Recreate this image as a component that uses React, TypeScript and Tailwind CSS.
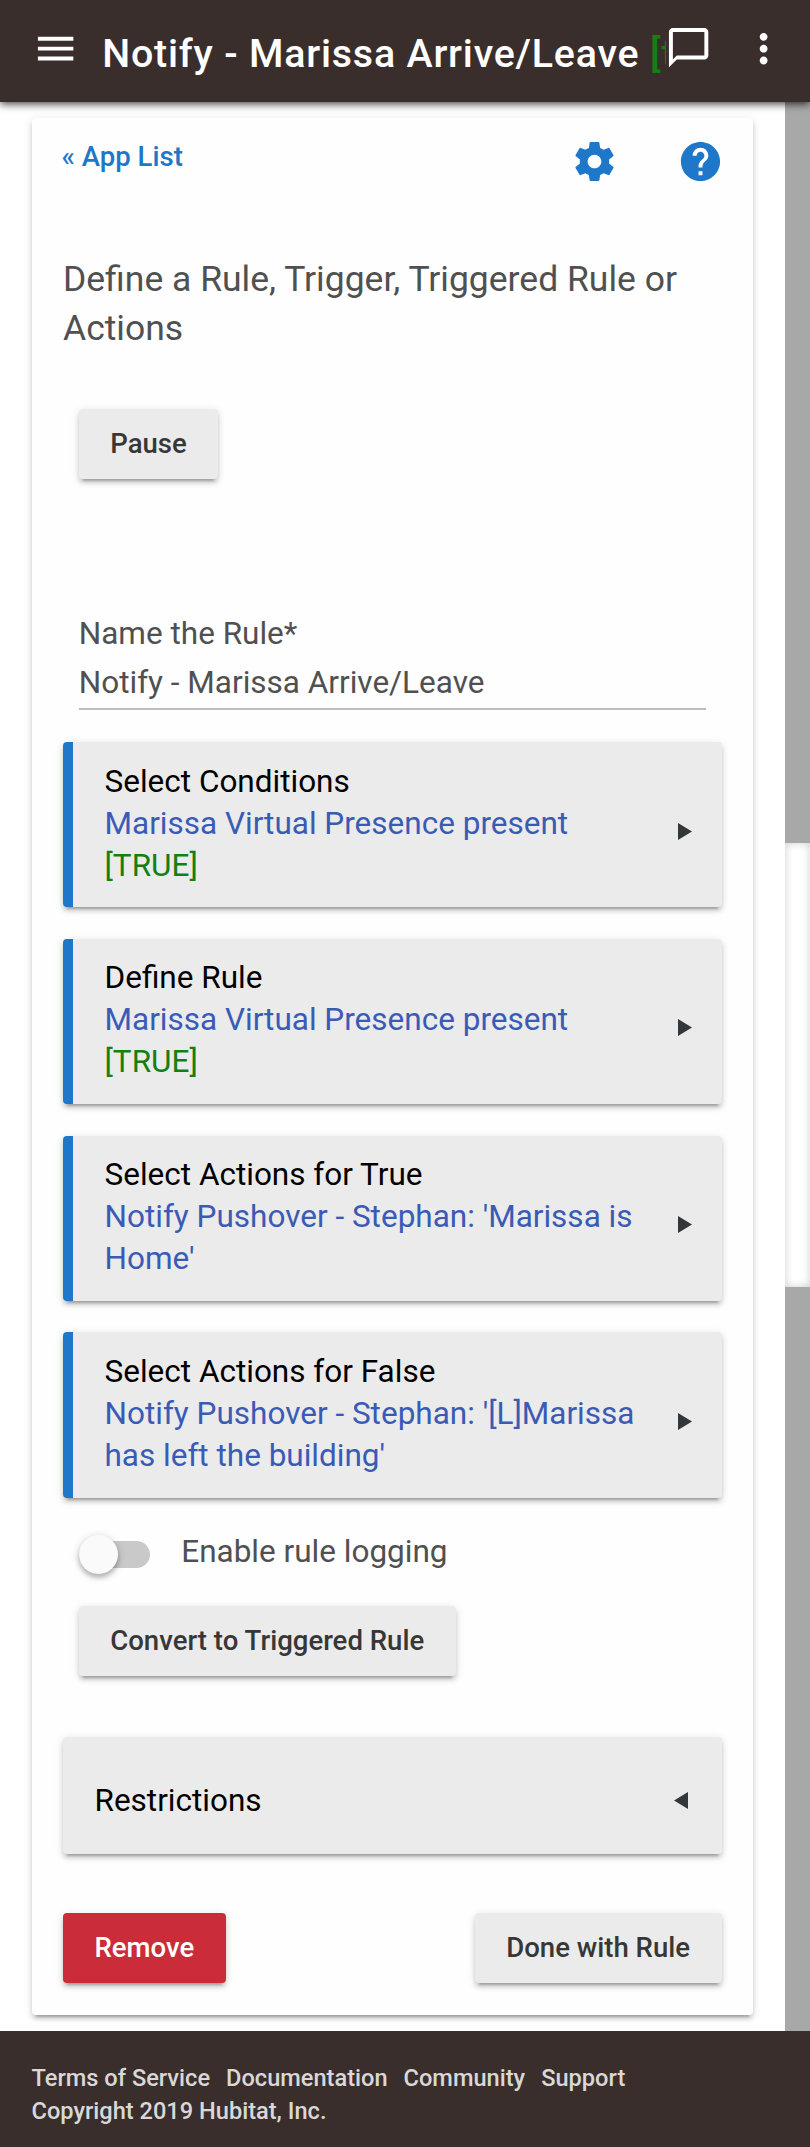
import { MdChatBubbleOutline, MdHelp, MdMenu, MdMoreVert } from "react-icons/md";
import type { ReactNode } from "react";

type Rule = {
  title: string;
  detail: string;
  status?: string;
};

const RULES: Rule[] = [
  { title: "Select Conditions", detail: "Marissa Virtual Presence present", status: "[TRUE]" },
  { title: "Define Rule", detail: "Marissa Virtual Presence present", status: "[TRUE]" },
  { title: "Select Actions for True", detail: "Notify Pushover - Stephan: 'Marissa is Home'" },
  { title: "Select Actions for False", detail: "Notify Pushover - Stephan: '[L]Marissa has left the building'" },
];

const FOOTER_LINKS = ["Terms of Service", "Documentation", "Community", "Support"];

const RAISED =
  "rounded-[4px] shadow-[0_4px_4px_0_rgba(0,0,0,0.14),0_6px_2px_-4px_rgba(0,0,0,0.2),0_2px_10px_0_rgba(0,0,0,0.12)]";

function GearIcon() {
  return (
    <svg viewBox="0 0 24 24" className="size-[47px] fill-current">
      <path d="M19.43 12.98c.04-.32.07-.64.07-.98s-.03-.66-.07-.98l2.11-1.65c.19-.15.24-.42.12-.64l-2-3.46c-.12-.22-.39-.3-.61-.22l-2.49 1c-.52-.4-1.08-.73-1.69-.98l-.38-2.65C14.46 2.18 14.25 2 14 2h-4c-.25 0-.46.18-.49.42l-.38 2.65c-.61.25-1.17.59-1.69.98l-2.49-1c-.23-.09-.49 0-.61.22l-2 3.46c-.13.22-.07.49.12.64l2.11 1.65c-.04.32-.07.65-.07.98s.03.66.07.98l-2.11 1.65c-.19.15-.24.42-.12.64l2 3.46c.12.22.39.3.61.22l2.49-1c.52.4 1.08.73 1.69.98l.38 2.65c.03.24.24.42.49.42h4c.25 0 .46-.18.49-.42l.38-2.65c.61-.25 1.17-.59 1.69-.98l2.49 1c.23.09.49 0 .61-.22l2-3.46c.12-.22.07-.49-.12-.64l-2.11-1.65zM12 15.5c-1.93 0-3.5-1.57-3.5-3.5s1.57-3.5 3.5-3.5 3.5 1.57 3.5 3.5-1.57 3.5-3.5 3.5z" />
    </svg>
  );
}

function Arrow({ left = false }: { left?: boolean }) {
  return (
    <svg viewBox="0 0 14 17" className="h-[17px] w-[14px] shrink-0 fill-[#33373a]">
      <path d={left ? "M14 0v17L0 8.5z" : "M0 0v17l14-8.5z"} />
    </svg>
  );
}

function Button({ children, danger = false }: { children: ReactNode; danger?: boolean }) {
  return (
    <button
      className={`block h-[70.6px] px-[31.5px] pb-[1.6px] text-[27.56px] leading-[69px] font-medium whitespace-nowrap ${RAISED} ${
        danger ? "bg-[#cb2c39] text-white" : "bg-[#ebebeb] text-[#373737]"
      }`}
    >
      {children}
    </button>
  );
}

function RuleCard({ rule }: { rule: Rule }) {
  return (
    <div
      className={`flex h-[165.4px] items-center border-l-[10px] border-[#1f77c9] bg-[#ebebeb] pr-[29.5px] pl-[31.5px] text-[31.5px] leading-[42px] ${RAISED}`}
    >
      <div className="w-[540px] pb-0.5">
        <p className="text-black">{rule.title}</p>
        <p className="text-[#3a5bb5]">{rule.detail}</p>
        {rule.status && <p className="text-[#128012]">{rule.status}</p>}
      </div>
      <div className="mt-[13px] ml-auto">
        <Arrow />
      </div>
    </div>
  );
}

export default function App() {
  return (
    <div className="flex h-[2147px] w-[810px] flex-col overflow-hidden bg-white font-['Roboto',sans-serif]">
      <header className="relative z-10 flex h-[102px] shrink-0 bg-[#392e2c] text-white shadow-[0_2px_8px_rgba(0,0,0,0.75)]">
        <MdMenu className="mt-[25.4px] ml-[31.5px] size-[47.25px] shrink-0" />
        <h1 className="ml-[23.5px] w-[563.5px] overflow-hidden pt-[25.5px] text-[39.4px] leading-[56px] font-medium tracking-[0.02em] whitespace-nowrap">
          Notify - Marissa Arrive/Leave <span className="text-[#128012]">[true]</span>
        </h1>
        <MdChatBubbleOutline className="mt-[23.6px] -ml-[0.4px] size-[47.25px] shrink-0" />
        <MdMoreVert className="mt-[24.8px] ml-[27.8px] size-[47.25px] shrink-0" />
      </header>

      <div className="flex h-[1929px] shrink-0">
        <main className="w-[785px] px-[31.5px] pt-4">
          <section className={`h-[1897px] w-[721.5px] bg-[#fefefe] px-[31.5px] ${RAISED}`}>
            <div className="flex h-[137px] text-[#1f77c9]">
              <a className="mt-[22px] -ml-[1.5px] text-[27.56px] leading-[34px] font-medium">« App List</a>
              <div className="mt-5 mr-[-2px] ml-auto flex gap-[59px]">
                <GearIcon />
                <MdHelp className="size-[47px]" />
              </div>
            </div>

            <h2 className="text-[35.5px] leading-[49.3px] text-[#505050]">
              Define a Rule, Trigger, Triggered Rule or Actions
            </h2>

            <div className="px-[15.75px] pt-[55px]">
              <Button>Pause</Button>
            </div>

            <div className="mx-[15.75px] mt-[129.4px] border-b-[2px] border-[#bdbdbd] text-[31.5px] leading-[49px] text-[#505050]">
              <p>Name the Rule*</p>
              <p className="h-[50.6px]">Notify - Marissa Arrive/Leave</p>
            </div>

            <div className="mt-[31.8px] flex flex-col gap-[31.4px]">
              {RULES.map((rule) => (
                <RuleCard key={rule.title} rule={rule} />
              ))}
            </div>

            <label className="mx-[15.75px] mt-[30px] flex h-12 items-center gap-[31.5px]">
              <span className="mt-[5px] flex h-[27px] w-[71px] items-center rounded-full bg-[#c9c9c9]">
                <span className="size-[39.4px] shrink-0 rounded-full bg-[#fafafa] shadow-[0_4px_4px_rgba(0,0,0,0.18),0_2px_8px_rgba(0,0,0,0.2)]" />
              </span>
              <span className="text-[31.5px] leading-[42px] text-[#505050]">Enable rule logging</span>
            </label>

            <div className="px-[15.75px] pt-[30px]">
              <Button>Convert to Triggered Rule</Button>
            </div>

            <div className={`mt-[61px] flex h-[117px] items-center justify-between bg-[#ebebeb] pt-2.5 pr-[34px] pl-[31.5px] text-[31.5px] text-black ${RAISED}`}>
              <span>Restrictions</span>
              <Arrow left />
            </div>

            <div className="mt-[58.6px] flex justify-between">
              <Button danger>Remove</Button>
              <Button>Done with Rule</Button>
            </div>
          </section>
        </main>

        {/* page scrollbar */}
        <div className="w-[25px] bg-[#a8a8a8] pt-[741px]">
          <div className="h-[444px] bg-white shadow-[inset_0_0_8px_rgba(0,0,0,0.2)]" />
        </div>
      </div>

      <footer className="h-[116px] shrink-0 bg-[#392e2c] px-[31.5px] pt-[30.5px] text-[23.6px] leading-[33.5px] font-medium text-[#dad8d7]">
        <nav className="flex gap-4">
          {FOOTER_LINKS.map((link) => (
            <a key={link}>{link}</a>
          ))}
        </nav>
        <p>Copyright 2019 Hubitat, Inc.</p>
      </footer>
    </div>
  );
}
